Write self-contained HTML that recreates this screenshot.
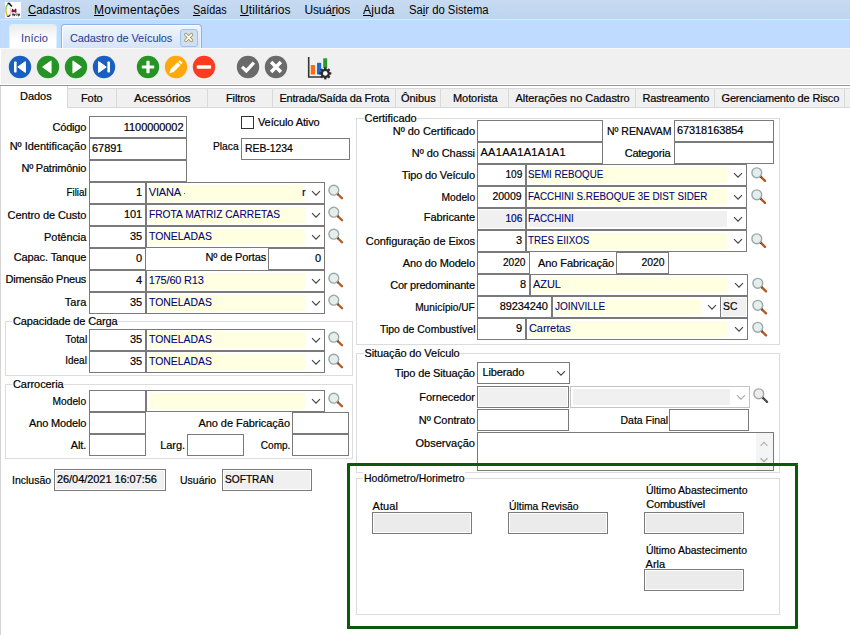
<!DOCTYPE html>
<html lang="pt-BR"><head><meta charset="utf-8"><title>Cadastro de Veículos</title>
<style>
html,body{margin:0;padding:0}
body{width:850px;height:635px;overflow:hidden;background:#fff;position:relative;font-family:"Liberation Sans",sans-serif;}
#r{position:absolute;left:0;top:0;width:850px;height:635px;overflow:hidden;background:#fff}
#r>*{position:absolute;box-sizing:content-box;margin:0;padding:0}
#r>span{white-space:nowrap;-webkit-text-stroke:0.2px;font-family:"Liberation Sans",sans-serif;}
#r>svg{overflow:visible;display:block}
u{text-decoration:underline;text-underline-offset:1px}
</style></head>
<body><div id="r">
<div style="left:0px;top:0px;width:850px;height:19px;background:linear-gradient(#c6daf1,#c3d8f0 50%,#bcd5ef);"></div>
<div style="left:0px;top:19px;width:850px;height:1px;background:#e6eaf0;"></div>
<div style="left:0px;top:20px;width:850px;height:28px;background:#bfdbff;"></div>
<div style="left:0px;top:48px;width:850px;height:1px;background:#fafafa;"></div>
<div style="left:1px;top:49px;width:849px;height:35px;background:#f0f0f0;"></div>
<div style="left:0px;top:85px;width:850px;height:1px;background:#969696;"></div>
<div style="left:0px;top:86px;width:1px;height:549px;background:#d4d4d4;"></div>
<svg style="left:5px;top:2px" width="16" height="16" viewBox="0 0 16 16"><rect width="16" height="16" fill="#fff"/><path d="M2.9 2 C1.4 3.4 0.9 5.6 0.9 7.6" fill="none" stroke="#8cc21f" stroke-width="1.5"/><path d="M0.9 7.6 C0.9 10 1.3 12.2 2.3 13.8" fill="none" stroke="#e2c21c" stroke-width="1.5"/><path d="M2.3 13.9 C3.3 14.8 4.6 14.2 5.3 12.6" fill="none" stroke="#7c1236" stroke-width="1.3"/><path d="M5.3 12.6 C5.9 10.5 5.9 8 5.4 6" fill="none" stroke="#e8b8c4" stroke-width="0.9"/><path d="M2.6 1.7 C3.8 0.9 4.8 1.6 5.3 2.9 L6.9 4.5" fill="none" stroke="#0e1626" stroke-width="1.6"/><path d="M7.2 10.4 L7.6 7.6 L9 9.6 L10.6 7.4 L10.8 10.6" fill="none" stroke="#7c1236" stroke-width="1.5" stroke-linejoin="round"/><path d="M7.2 11.6 L8 13.4 L8.8 12 L9.6 13.4 L10.4 11.8 M11.2 13.3 L12.4 13.3 M11.4 11.9 L12.3 11.9 M13 11.8 L13.6 13.4 L14.2 12.2 L14.8 13.4" fill="none" stroke="#3c3c40" stroke-width="1.1"/></svg>
<span style="top:3px;font-size:12px;line-height:14px;color:#000;transform:scaleX(0.9524);transform-origin:0 0;left:28px;-webkit-text-stroke:0;"><u>C</u>adastros</span>
<span style="top:3px;font-size:12px;line-height:14px;color:#000;letter-spacing:0.119px;left:94px;-webkit-text-stroke:0;"><u>M</u>ovimentações</span>
<span style="top:3px;font-size:12px;line-height:14px;color:#000;transform:scaleX(0.8990);transform-origin:0 0;left:193px;-webkit-text-stroke:0;"><u>S</u>aídas</span>
<span style="top:3px;font-size:12px;line-height:14px;color:#000;letter-spacing:0.113px;left:240px;-webkit-text-stroke:0;"><u>U</u>tilitários</span>
<span style="top:3px;font-size:12px;line-height:14px;color:#000;letter-spacing:-0.220px;left:304.5px;-webkit-text-stroke:0;">Usuá<u>r</u>ios</span>
<span style="top:3px;font-size:12px;line-height:14px;color:#000;letter-spacing:0.179px;left:363px;-webkit-text-stroke:0;"><u>A</u>juda</span>
<span style="top:3px;font-size:12px;line-height:14px;color:#000;transform:scaleX(0.9396);transform-origin:0 0;left:408.5px;-webkit-text-stroke:0;">Sa<u>i</u>r do Sistema</span>
<div style="left:9px;top:24px;width:46px;height:23px;border:1px solid #d4f2ff;border-bottom:none;border-radius:4px 4px 0 0;background:linear-gradient(#ececec,#fff 70%);"></div>
<span style="top:32px;font-size:11px;line-height:13px;color:#1e3a8c;letter-spacing:0.134px;left:21px;-webkit-text-stroke:0;">Início</span>
<div style="left:61px;top:24px;width:139px;height:23px;border:1px solid #8fb3e4;border-bottom:none;border-radius:4px 4px 0 0;background:linear-gradient(#eff5fd,#d7e4f8);box-shadow:inset 1px 1px 0 #fff,inset -1px 0 0 #e8f4ff;"></div>
<span style="top:32px;font-size:11px;line-height:13px;color:#1e3a8c;letter-spacing:-0.124px;left:70px;-webkit-text-stroke:0;">Cadastro de Veículos</span>
<div style="left:180px;top:29px;width:16px;height:16px;border:1px solid #a4c0e6;border-radius:3px;background:#cfdff5;"></div>
<svg style="left:183px;top:32px" width="12" height="12" viewBox="0 0 12 12"><path d="M2.9 2.6 L8.5 8.4 M8.5 2.6 L2.9 8.4" stroke="#94853c" stroke-width="3.3" stroke-linecap="round"/><path d="M2.9 2.6 L8.5 8.4 M8.5 2.6 L2.9 8.4" stroke="#fffdf4" stroke-width="1.9" stroke-linecap="round"/></svg>
<svg style="left:8px;top:55px" width="24" height="24" viewBox="0 0 24 24"><circle cx="12" cy="12" r="11.2" fill="#1a5fbf"/><rect x="6" y="6.4" width="2.6" height="11.2" rx="0.8" fill="#fff"/><path d="M9.8 12 L17.4 6.6 L17.4 17.4 Z" fill="#fff" stroke="#fff" stroke-width="1" stroke-linejoin="round"/></svg>
<svg style="left:36px;top:55px" width="24" height="24" viewBox="0 0 24 24"><circle cx="12" cy="12" r="11.2" fill="#259425"/><path d="M6.9 12 L15 6.2 L15 17.8 Z" fill="#fff" stroke="#fff" stroke-width="1.2" stroke-linejoin="round"/></svg>
<svg style="left:64px;top:55px" width="24" height="24" viewBox="0 0 24 24"><circle cx="12" cy="12" r="11.2" fill="#259425"/><path d="M17.1 12 L9 6.2 L9 17.8 Z" fill="#fff" stroke="#fff" stroke-width="1.2" stroke-linejoin="round"/></svg>
<svg style="left:92px;top:55px" width="24" height="24" viewBox="0 0 24 24"><circle cx="12" cy="12" r="11.2" fill="#1a5fbf"/><rect x="15.4" y="6.4" width="2.6" height="11.2" rx="0.8" fill="#fff"/><path d="M14.2 12 L6.6 6.6 L6.6 17.4 Z" fill="#fff" stroke="#fff" stroke-width="1" stroke-linejoin="round"/></svg>
<svg style="left:136px;top:55px" width="24" height="24" viewBox="0 0 24 24"><circle cx="12" cy="12" r="11.2" fill="#259425"/><rect x="5.8" y="10.4" width="12.4" height="3.2" rx="0.7" fill="#fff"/><rect x="10.4" y="5.8" width="3.2" height="12.4" rx="0.7" fill="#fff"/></svg>
<svg style="left:164px;top:55px" width="24" height="24" viewBox="0 0 24 24"><circle cx="12" cy="12" r="11.2" fill="#ffa80a"/><path d="M5.5 18.2 L6.9 14 L13.6 7.2 L16.4 10 L9.8 16.8 Z" fill="#fff" stroke="#fff" stroke-width="0.3" stroke-linejoin="round"/><path d="M14.3 6.5 L15.5 5.3 Q15.9 5 16.3 5.4 L18.3 7.4 Q18.6 7.8 18.3 8.2 L17.1 9.3 Z" fill="#fff"/></svg>
<svg style="left:192px;top:55px" width="24" height="24" viewBox="0 0 24 24"><circle cx="12" cy="12" r="11.2" fill="#ff3b1f"/><rect x="4.8" y="10.3" width="14.3" height="3.4" rx="0.6" fill="#fff"/></svg>
<svg style="left:236px;top:55px" width="24" height="24" viewBox="0 0 24 24"><circle cx="12" cy="12" r="11.2" fill="#6a6a6a"/><path d="M6.1 11.9 L10.3 15.9 L17.9 7.7" fill="none" stroke="#fff" stroke-width="3.3" stroke-linecap="butt" stroke-linejoin="miter"/></svg>
<svg style="left:264px;top:55px" width="24" height="24" viewBox="0 0 24 24"><circle cx="12" cy="12" r="11.2" fill="#6a6a6a"/><path d="M7.1 7.1 L16.9 16.9 M16.9 7.1 L7.1 16.9" stroke="#fff" stroke-width="3.5" stroke-linecap="butt"/></svg>
<svg style="left:306px;top:55px" width="28" height="26" viewBox="0 0 28 26"><path d="M2.7 2 V22 H15" fill="none" stroke="#333" stroke-width="1.6"/><rect x="4.8" y="10" width="4.2" height="9.6" rx="0.6" fill="#ff6a10"/><rect x="11" y="7.8" width="4.2" height="11.8" rx="0.6" fill="#1e6ad2"/><rect x="17.2" y="3.2" width="4" height="10" rx="0.6" fill="#2a9a2a"/><g transform="translate(19.3,18.4)"><circle r="3.4" fill="none" stroke="#2e2e2e" stroke-width="2.4"/><rect x="-1.2" y="-6" width="2.4" height="2.6" fill="#2e2e2e" transform="rotate(0)"/><rect x="-1.2" y="-6" width="2.4" height="2.6" fill="#2e2e2e" transform="rotate(45)"/><rect x="-1.2" y="-6" width="2.4" height="2.6" fill="#2e2e2e" transform="rotate(90)"/><rect x="-1.2" y="-6" width="2.4" height="2.6" fill="#2e2e2e" transform="rotate(135)"/><rect x="-1.2" y="-6" width="2.4" height="2.6" fill="#2e2e2e" transform="rotate(180)"/><rect x="-1.2" y="-6" width="2.4" height="2.6" fill="#2e2e2e" transform="rotate(225)"/><rect x="-1.2" y="-6" width="2.4" height="2.6" fill="#2e2e2e" transform="rotate(270)"/><rect x="-1.2" y="-6" width="2.4" height="2.6" fill="#2e2e2e" transform="rotate(315)"/><circle r="2.1" fill="#fff"/></g></svg>
<div style="left:68px;top:88px;width:782px;height:1px;background:#d9d9d9;"></div>
<div style="left:68px;top:89px;width:782px;height:18px;background:#f0f0f0;"></div>
<div style="left:68px;top:107px;width:782px;height:1px;background:#d9d9d9;"></div>
<div style="left:67px;top:86px;width:1px;height:22px;background:#d9d9d9;"></div>
<div style="left:116px;top:88px;width:1px;height:20px;background:#d9d9d9;"></div>
<div style="left:207px;top:88px;width:1px;height:20px;background:#d9d9d9;"></div>
<div style="left:272px;top:88px;width:1px;height:20px;background:#d9d9d9;"></div>
<div style="left:395px;top:88px;width:1px;height:20px;background:#d9d9d9;"></div>
<div style="left:440px;top:88px;width:1px;height:20px;background:#d9d9d9;"></div>
<div style="left:508px;top:88px;width:1px;height:20px;background:#d9d9d9;"></div>
<div style="left:635px;top:88px;width:1px;height:20px;background:#d9d9d9;"></div>
<div style="left:714px;top:88px;width:1px;height:20px;background:#d9d9d9;"></div>
<div style="left:844px;top:88px;width:1px;height:20px;background:#d9d9d9;"></div>
<span style="top:90px;font-size:11px;line-height:13px;color:#000;letter-spacing:-0.039px;left:20px;">Dados</span>
<span style="top:92px;font-size:11px;line-height:13px;color:#000;letter-spacing:-0.104px;left:81px;">Foto</span>
<span style="top:92px;font-size:11px;line-height:13px;color:#000;transform:scaleX(1.0521);transform-origin:0 0;left:134px;">Acessórios</span>
<span style="top:92px;font-size:11px;line-height:13px;color:#000;letter-spacing:-0.122px;left:226px;">Filtros</span>
<span style="top:92px;font-size:11px;line-height:13px;color:#000;letter-spacing:-0.216px;left:279.5px;">Entrada/Saída da Frota</span>
<span style="top:92px;font-size:11px;line-height:13px;color:#000;letter-spacing:-0.043px;left:401px;">Ônibus</span>
<span style="top:92px;font-size:11px;line-height:13px;color:#000;letter-spacing:-0.072px;left:453px;">Motorista</span>
<span style="top:92px;font-size:11px;line-height:13px;color:#000;letter-spacing:-0.039px;left:515.5px;">Alterações no Cadastro</span>
<span style="top:92px;font-size:11px;line-height:13px;color:#000;letter-spacing:-0.208px;left:642.5px;">Rastreamento</span>
<span style="top:92px;font-size:11px;line-height:13px;color:#000;letter-spacing:-0.157px;left:721.5px;">Gerenciamento de Risco</span>
<span style="top:121px;font-size:11px;line-height:13px;color:#000;letter-spacing:-0.210px;right:763.910px;">Código</span>
<span style="top:140px;font-size:11px;line-height:13px;color:#000;letter-spacing:-0.011px;right:763.711px;">Nº Identificação</span>
<span style="top:162px;font-size:11px;line-height:13px;color:#000;letter-spacing:-0.231px;right:763.931px;">Nº Patrimônio</span>
<span style="top:186px;font-size:11px;line-height:13px;color:#000;transform:scaleX(0.8884);transform-origin:100% 0;right:763.700px;">Filial</span>
<span style="top:209px;font-size:11px;line-height:13px;color:#000;letter-spacing:-0.101px;right:763.801px;">Centro de Custo</span>
<span style="top:231px;font-size:11px;line-height:13px;color:#000;letter-spacing:-0.089px;right:763.789px;">Potência</span>
<span style="top:251px;font-size:11px;line-height:13px;color:#000;letter-spacing:-0.093px;right:763.793px;">Capac. Tanque</span>
<span style="top:273px;font-size:11px;line-height:13px;color:#000;letter-spacing:-0.227px;right:763.927px;">Dimensão Pneus</span>
<span style="top:296px;font-size:11px;line-height:13px;color:#000;letter-spacing:0.048px;right:763.652px;">Tara</span>
<div style="left:89px;top:116px;width:96px;height:20px;background:#fff;border:1px solid #7a7a7a;"></div>
<span style="top:121px;font-size:11px;line-height:13px;color:#000;letter-spacing:-0.077px;right:666.577px;">1100000002</span>
<div style="left:89px;top:138px;width:96px;height:20px;background:#fff;border:1px solid #7a7a7a;"></div>
<span style="top:142px;font-size:11px;line-height:13px;color:#000;letter-spacing:-0.049px;left:92px;">67891</span>
<div style="left:89px;top:160px;width:96px;height:20px;background:#fff;border:1px solid #7a7a7a;"></div>
<div style="left:241px;top:116px;width:11px;height:11px;border:1px solid #333;background:#fff"></div>
<span style="top:116px;font-size:11px;line-height:13px;color:#000;letter-spacing:-0.108px;left:258px;">Veículo Ativo</span>
<span style="top:140px;font-size:11px;line-height:13px;color:#000;transform:scaleX(0.9299);transform-origin:0 0;left:213px;">Placa</span>
<div style="left:241px;top:138px;width:107px;height:20px;background:#fff;border:1px solid #7a7a7a;"></div>
<span style="top:142px;font-size:11px;line-height:13px;color:#000;transform:scaleX(0.9436);transform-origin:0 0;left:244.5px;">REB-1234</span>
<div style="left:89px;top:182px;width:55px;height:20px;background:#fff;border:1px solid #7a7a7a;"></div>
<span style="top:186px;font-size:11px;line-height:13px;color:#000;letter-spacing:-0.120px;right:708.120px;">1</span>
<div style="left:146px;top:182px;width:177px;height:20px;background:#fff;border:1px solid #7a7a7a;"></div>
<div style="left:149px;top:185px;width:156px;height:16px;background:#ffffe1;"></div>
<svg style="left:311px;top:190px" width="10" height="7" viewBox="0 0 10 7"><path d="M1 1.1 L5 5.1 L9 1.1" fill="none" stroke="#404040" stroke-width="1.1"/></svg>
<span style="top:186px;font-size:11px;line-height:13px;color:#00007f;letter-spacing:-0.183px;left:148.8px;-webkit-text-stroke:0.08px;">VIANA</span>
<svg style="left:328px;top:184px" width="17" height="17" viewBox="0 -0.4000000000000057 17 17"><line x1="9.6" y1="9.6" x2="14" y2="13.9" stroke="#b4561e" stroke-width="2.3" stroke-linecap="round"/><line x1="9.3" y1="9.4" x2="10.2" y2="10.2" stroke="#4a2a12" stroke-width="2.3"/><circle cx="5.8" cy="5.8" r="4.9" fill="#e7eded" stroke="#98a9a9" stroke-width="1.4"/></svg>
<span style="top:186px;font-size:11px;line-height:13px;color:#00007f;letter-spacing:-0.120px;left:302px;">r</span>
<div style="left:184px;top:193px;width:1px;height:1px;background:#6060b0;"></div>
<div style="left:89px;top:204px;width:55px;height:20px;background:#fff;border:1px solid #7a7a7a;"></div>
<span style="top:208px;font-size:11px;line-height:13px;color:#000;letter-spacing:-0.120px;right:708.120px;">101</span>
<div style="left:146px;top:204px;width:177px;height:20px;background:#fff;border:1px solid #7a7a7a;"></div>
<div style="left:149px;top:207px;width:156px;height:16px;background:#ffffe1;"></div>
<svg style="left:311px;top:212px" width="10" height="7" viewBox="0 0 10 7"><path d="M1 1.1 L5 5.1 L9 1.1" fill="none" stroke="#404040" stroke-width="1.1"/></svg>
<span style="top:208px;font-size:11px;line-height:13px;color:#00007f;transform:scaleX(0.9287);transform-origin:0 0;left:148.8px;-webkit-text-stroke:0.08px;">FROTA MATRIZ CARRETAS</span>
<svg style="left:328px;top:206px" width="17" height="17" viewBox="0 -0.4000000000000057 17 17"><line x1="9.6" y1="9.6" x2="14" y2="13.9" stroke="#b4561e" stroke-width="2.3" stroke-linecap="round"/><line x1="9.3" y1="9.4" x2="10.2" y2="10.2" stroke="#4a2a12" stroke-width="2.3"/><circle cx="5.8" cy="5.8" r="4.9" fill="#e7eded" stroke="#98a9a9" stroke-width="1.4"/></svg>
<div style="left:89px;top:226px;width:55px;height:20px;background:#fff;border:1px solid #7a7a7a;"></div>
<span style="top:230px;font-size:11px;line-height:13px;color:#000;letter-spacing:-0.120px;right:708.120px;">35</span>
<div style="left:146px;top:226px;width:177px;height:20px;background:#fff;border:1px solid #7a7a7a;"></div>
<div style="left:149px;top:229px;width:156px;height:16px;background:#ffffe1;"></div>
<svg style="left:311px;top:234px" width="10" height="7" viewBox="0 0 10 7"><path d="M1 1.1 L5 5.1 L9 1.1" fill="none" stroke="#404040" stroke-width="1.1"/></svg>
<span style="top:230px;font-size:11px;line-height:13px;color:#00007f;transform:scaleX(0.9460);transform-origin:0 0;left:148.8px;-webkit-text-stroke:0.08px;">TONELADAS</span>
<svg style="left:328px;top:228px" width="17" height="17" viewBox="0 -0.4000000000000057 17 17"><line x1="9.6" y1="9.6" x2="14" y2="13.9" stroke="#b4561e" stroke-width="2.3" stroke-linecap="round"/><line x1="9.3" y1="9.4" x2="10.2" y2="10.2" stroke="#4a2a12" stroke-width="2.3"/><circle cx="5.8" cy="5.8" r="4.9" fill="#e7eded" stroke="#98a9a9" stroke-width="1.4"/></svg>
<div style="left:89px;top:248px;width:55px;height:20px;background:#fff;border:1px solid #7a7a7a;"></div>
<span style="top:252px;font-size:11px;line-height:13px;color:#000;letter-spacing:-0.120px;right:708.120px;">0</span>
<span style="top:251px;font-size:11px;line-height:13px;color:#000;letter-spacing:-0.126px;left:205.5px;">Nº de Portas</span>
<div style="left:268px;top:248px;width:55px;height:20px;background:#fff;border:1px solid #7a7a7a;"></div>
<span style="top:252px;font-size:11px;line-height:13px;color:#000;letter-spacing:-0.120px;right:529.120px;">0</span>
<div style="left:89px;top:270px;width:55px;height:20px;background:#fff;border:1px solid #7a7a7a;"></div>
<span style="top:274px;font-size:11px;line-height:13px;color:#000;letter-spacing:-0.120px;right:708.120px;">4</span>
<div style="left:146px;top:270px;width:177px;height:20px;background:#fff;border:1px solid #7a7a7a;"></div>
<div style="left:149px;top:273px;width:156px;height:16px;background:#ffffe1;"></div>
<svg style="left:311px;top:278px" width="10" height="7" viewBox="0 0 10 7"><path d="M1 1.1 L5 5.1 L9 1.1" fill="none" stroke="#404040" stroke-width="1.1"/></svg>
<span style="top:274px;font-size:11px;line-height:13px;color:#00007f;letter-spacing:-0.204px;left:148.8px;-webkit-text-stroke:0.08px;">175/60 R13</span>
<svg style="left:328px;top:272px" width="17" height="17" viewBox="0 -0.39999999999997726 17 17"><line x1="9.6" y1="9.6" x2="14" y2="13.9" stroke="#b4561e" stroke-width="2.3" stroke-linecap="round"/><line x1="9.3" y1="9.4" x2="10.2" y2="10.2" stroke="#4a2a12" stroke-width="2.3"/><circle cx="5.8" cy="5.8" r="4.9" fill="#e7eded" stroke="#98a9a9" stroke-width="1.4"/></svg>
<div style="left:89px;top:292px;width:55px;height:20px;background:#fff;border:1px solid #7a7a7a;"></div>
<span style="top:296px;font-size:11px;line-height:13px;color:#000;letter-spacing:-0.120px;right:708.120px;">35</span>
<div style="left:146px;top:292px;width:177px;height:20px;background:#fff;border:1px solid #7a7a7a;"></div>
<div style="left:149px;top:295px;width:156px;height:16px;background:#ffffe1;"></div>
<svg style="left:311px;top:300px" width="10" height="7" viewBox="0 0 10 7"><path d="M1 1.1 L5 5.1 L9 1.1" fill="none" stroke="#404040" stroke-width="1.1"/></svg>
<span style="top:296px;font-size:11px;line-height:13px;color:#00007f;transform:scaleX(0.9460);transform-origin:0 0;left:148.8px;-webkit-text-stroke:0.08px;">TONELADAS</span>
<svg style="left:328px;top:294px" width="17" height="17" viewBox="0 -0.39999999999997726 17 17"><line x1="9.6" y1="9.6" x2="14" y2="13.9" stroke="#b4561e" stroke-width="2.3" stroke-linecap="round"/><line x1="9.3" y1="9.4" x2="10.2" y2="10.2" stroke="#4a2a12" stroke-width="2.3"/><circle cx="5.8" cy="5.8" r="4.9" fill="#e7eded" stroke="#98a9a9" stroke-width="1.4"/></svg>
<div style="left:5px;top:321px;width:346px;height:53px;border:1px solid #dcdcdc;"></div>
<div style="left:12px;top:315px;width:106px;height:12px;background:#fff;"></div>
<span style="top:315px;font-size:11px;line-height:13px;color:#000;letter-spacing:-0.128px;left:13px;">Capacidade de Carga</span>
<span style="top:333px;font-size:11px;line-height:13px;color:#000;transform:scaleX(0.9505);transform-origin:100% 0;right:762.700px;">Total</span>
<div style="left:89px;top:329px;width:55px;height:20px;background:#fff;border:1px solid #7a7a7a;"></div>
<span style="top:333px;font-size:11px;line-height:13px;color:#000;letter-spacing:-0.120px;right:708.120px;">35</span>
<div style="left:146px;top:329px;width:177px;height:20px;background:#fff;border:1px solid #7a7a7a;"></div>
<div style="left:149px;top:332px;width:156px;height:16px;background:#ffffe1;"></div>
<svg style="left:311px;top:337px" width="10" height="7" viewBox="0 0 10 7"><path d="M1 1.1 L5 5.1 L9 1.1" fill="none" stroke="#404040" stroke-width="1.1"/></svg>
<span style="top:333px;font-size:11px;line-height:13px;color:#00007f;transform:scaleX(0.9460);transform-origin:0 0;left:148.8px;-webkit-text-stroke:0.08px;">TONELADAS</span>
<svg style="left:328px;top:331px" width="17" height="17" viewBox="0 -0.39999999999997726 17 17"><line x1="9.6" y1="9.6" x2="14" y2="13.9" stroke="#b4561e" stroke-width="2.3" stroke-linecap="round"/><line x1="9.3" y1="9.4" x2="10.2" y2="10.2" stroke="#4a2a12" stroke-width="2.3"/><circle cx="5.8" cy="5.8" r="4.9" fill="#e7eded" stroke="#98a9a9" stroke-width="1.4"/></svg>
<span style="top:354px;font-size:11px;line-height:13px;color:#000;transform:scaleX(0.9053);transform-origin:100% 0;right:762.700px;">Ideal</span>
<div style="left:89px;top:351px;width:55px;height:20px;background:#fff;border:1px solid #7a7a7a;"></div>
<span style="top:355px;font-size:11px;line-height:13px;color:#000;letter-spacing:-0.120px;right:708.120px;">35</span>
<div style="left:146px;top:351px;width:177px;height:20px;background:#fff;border:1px solid #7a7a7a;"></div>
<div style="left:149px;top:354px;width:156px;height:16px;background:#ffffe1;"></div>
<svg style="left:311px;top:359px" width="10" height="7" viewBox="0 0 10 7"><path d="M1 1.1 L5 5.1 L9 1.1" fill="none" stroke="#404040" stroke-width="1.1"/></svg>
<span style="top:355px;font-size:11px;line-height:13px;color:#00007f;transform:scaleX(0.9460);transform-origin:0 0;left:148.8px;-webkit-text-stroke:0.08px;">TONELADAS</span>
<svg style="left:328px;top:353px" width="17" height="17" viewBox="0 -0.39999999999997726 17 17"><line x1="9.6" y1="9.6" x2="14" y2="13.9" stroke="#b4561e" stroke-width="2.3" stroke-linecap="round"/><line x1="9.3" y1="9.4" x2="10.2" y2="10.2" stroke="#4a2a12" stroke-width="2.3"/><circle cx="5.8" cy="5.8" r="4.9" fill="#e7eded" stroke="#98a9a9" stroke-width="1.4"/></svg>
<div style="left:5px;top:384px;width:346px;height:73px;border:1px solid #dcdcdc;"></div>
<div style="left:12px;top:378px;width:52px;height:12px;background:#fff;"></div>
<span style="top:378px;font-size:11px;line-height:13px;color:#000;letter-spacing:-0.076px;left:13px;">Carroceria</span>
<span style="top:395px;font-size:11px;line-height:13px;color:#000;transform:scaleX(0.9313);transform-origin:100% 0;right:763.700px;">Modelo</span>
<div style="left:89px;top:390px;width:55px;height:20px;background:#fff;border:1px solid #7a7a7a;"></div>
<div style="left:146px;top:390px;width:177px;height:20px;background:#fff;border:1px solid #7a7a7a;"></div>
<div style="left:149px;top:393px;width:156px;height:16px;background:#ffffe1;"></div>
<svg style="left:311px;top:398px" width="10" height="7" viewBox="0 0 10 7"><path d="M1 1.1 L5 5.1 L9 1.1" fill="none" stroke="#404040" stroke-width="1.1"/></svg>
<svg style="left:328px;top:392px" width="17" height="17" viewBox="0 -0.39999999999997726 17 17"><line x1="9.6" y1="9.6" x2="14" y2="13.9" stroke="#b4561e" stroke-width="2.3" stroke-linecap="round"/><line x1="9.3" y1="9.4" x2="10.2" y2="10.2" stroke="#4a2a12" stroke-width="2.3"/><circle cx="5.8" cy="5.8" r="4.9" fill="#e7eded" stroke="#98a9a9" stroke-width="1.4"/></svg>
<span style="top:417px;font-size:11px;line-height:13px;color:#000;letter-spacing:-0.162px;right:763.862px;">Ano Modelo</span>
<div style="left:89px;top:412px;width:55px;height:20px;background:#fff;border:1px solid #7a7a7a;"></div>
<span style="top:439px;font-size:11px;line-height:13px;color:#000;letter-spacing:-0.077px;right:763.777px;">Alt.</span>
<div style="left:89px;top:434px;width:55px;height:20px;background:#fff;border:1px solid #7a7a7a;"></div>
<span style="top:417px;font-size:11px;line-height:13px;color:#000;letter-spacing:-0.044px;right:560.044px;">Ano de Fabricação</span>
<div style="left:292px;top:412px;width:55px;height:20px;background:#fff;border:1px solid #7a7a7a;"></div>
<span style="top:439px;font-size:11px;line-height:13px;color:#000;letter-spacing:-0.096px;right:665.096px;">Larg.</span>
<div style="left:187px;top:434px;width:55px;height:20px;background:#fff;border:1px solid #7a7a7a;"></div>
<span style="top:439px;font-size:11px;line-height:13px;color:#000;transform:scaleX(0.9134);transform-origin:100% 0;right:560.000px;">Comp.</span>
<div style="left:292px;top:434px;width:55px;height:20px;background:#fff;border:1px solid #7a7a7a;"></div>
<span style="top:474px;font-size:11px;line-height:13px;color:#000;transform:scaleX(0.9540);transform-origin:0 0;left:11.5px;">Inclusão</span>
<div style="left:54px;top:469px;width:110px;height:20px;background:#f0f0f0;border:1px solid #7a7a7a;box-shadow:inset 0 0 0 1px #fff;"></div>
<span style="top:473px;font-size:11px;line-height:13px;color:#000;letter-spacing:-0.057px;left:57px;">26/04/2021 16:07:56</span>
<span style="top:474px;font-size:11px;line-height:13px;color:#000;transform:scaleX(0.9523);transform-origin:0 0;left:179.5px;">Usuário</span>
<div style="left:222px;top:469px;width:88px;height:20px;background:#f0f0f0;border:1px solid #7a7a7a;box-shadow:inset 0 0 0 1px #fff;"></div>
<span style="top:473px;font-size:11px;line-height:13px;color:#000;transform:scaleX(0.9246);transform-origin:0 0;left:224.5px;">SOFTRAN</span>
<div style="left:356px;top:118px;width:422px;height:225px;border:1px solid #dcdcdc;"></div>
<div style="left:363.5px;top:112px;width:53.5px;height:12px;background:#fff;"></div>
<span style="top:112px;font-size:11px;line-height:13px;color:#000;letter-spacing:-0.043px;left:364.5px;">Certificado</span>
<span style="top:125px;font-size:11px;line-height:13px;color:#000;letter-spacing:-0.047px;right:375.047px;">Nº do Certificado</span>
<div style="left:477px;top:120px;width:124px;height:20px;background:#fff;border:1px solid #7a7a7a;"></div>
<span style="top:125px;font-size:11px;line-height:13px;color:#000;transform:scaleX(0.9528);transform-origin:0 0;left:606.5px;">Nº RENAVAM</span>
<div style="left:674px;top:120px;width:98px;height:20px;background:#fff;border:1px solid #7a7a7a;"></div>
<span style="top:124px;font-size:11px;line-height:13px;color:#000;letter-spacing:-0.091px;left:677px;">67318163854</span>
<span style="top:147px;font-size:11px;line-height:13px;color:#000;letter-spacing:-0.070px;right:375.070px;">Nº do Chassi</span>
<div style="left:477px;top:142px;width:124px;height:20px;background:#fff;border:1px solid #7a7a7a;"></div>
<span style="top:146px;font-size:11px;line-height:13px;color:#000;letter-spacing:0.279px;left:480.5px;">AA1AA1A1A1A1</span>
<span style="top:147px;font-size:11px;line-height:13px;color:#000;letter-spacing:-0.234px;right:179.734px;">Categoria</span>
<div style="left:674px;top:142px;width:98px;height:20px;background:#fff;border:1px solid #7a7a7a;"></div>
<span style="top:169px;font-size:11px;line-height:13px;color:#000;letter-spacing:-0.155px;right:375.155px;">Tipo do Veículo</span>
<div style="left:477px;top:164px;width:47px;height:20px;background:#fff;border:1px solid #7a7a7a;"></div>
<span style="top:168px;font-size:11px;line-height:13px;color:#000;transform:scaleX(0.9205);transform-origin:100% 0;right:328.000px;">109</span>
<div style="left:526px;top:164px;width:219px;height:20px;background:#fff;border:1px solid #7a7a7a;"></div>
<div style="left:529px;top:167px;width:198px;height:16px;background:#ffffe1;"></div>
<svg style="left:733px;top:172px" width="10" height="7" viewBox="0 0 10 7"><path d="M1 1.1 L5 5.1 L9 1.1" fill="none" stroke="#404040" stroke-width="1.1"/></svg>
<span style="top:168px;font-size:11px;line-height:13px;color:#00007f;transform:scaleX(0.8850);transform-origin:0 0;left:528.4px;-webkit-text-stroke:0.08px;">SEMI REBOQUE</span>
<svg style="left:751px;top:167px" width="17" height="17" viewBox="0 0 17 17"><line x1="9.6" y1="9.6" x2="14" y2="13.9" stroke="#b4561e" stroke-width="2.3" stroke-linecap="round"/><line x1="9.3" y1="9.4" x2="10.2" y2="10.2" stroke="#4a2a12" stroke-width="2.3"/><circle cx="5.8" cy="5.8" r="4.9" fill="#e7eded" stroke="#98a9a9" stroke-width="1.4"/></svg>
<span style="top:191px;font-size:11px;line-height:13px;color:#000;transform:scaleX(0.9313);transform-origin:100% 0;right:375.000px;">Modelo</span>
<div style="left:477px;top:186px;width:47px;height:20px;background:#fff;border:1px solid #7a7a7a;"></div>
<span style="top:190px;font-size:11px;line-height:13px;color:#000;transform:scaleX(0.9544);transform-origin:100% 0;right:328.000px;">20009</span>
<div style="left:526px;top:186px;width:219px;height:20px;background:#fff;border:1px solid #7a7a7a;"></div>
<div style="left:529px;top:189px;width:198px;height:16px;background:#ffffe1;"></div>
<svg style="left:733px;top:194px" width="10" height="7" viewBox="0 0 10 7"><path d="M1 1.1 L5 5.1 L9 1.1" fill="none" stroke="#404040" stroke-width="1.1"/></svg>
<span style="top:190px;font-size:11px;line-height:13px;color:#00007f;transform:scaleX(0.8930);transform-origin:0 0;left:528.4px;-webkit-text-stroke:0.08px;">FACCHINI S.REBOQUE 3E DIST SIDER</span>
<svg style="left:751px;top:189px" width="17" height="17" viewBox="0 0 17 17"><line x1="9.6" y1="9.6" x2="14" y2="13.9" stroke="#b4561e" stroke-width="2.3" stroke-linecap="round"/><line x1="9.3" y1="9.4" x2="10.2" y2="10.2" stroke="#4a2a12" stroke-width="2.3"/><circle cx="5.8" cy="5.8" r="4.9" fill="#e7eded" stroke="#98a9a9" stroke-width="1.4"/></svg>
<span style="top:211px;font-size:11px;line-height:13px;color:#000;letter-spacing:-0.088px;right:375.088px;">Fabricante</span>
<div style="left:477px;top:208px;width:47px;height:20px;background:#f0f0f0;border:1px solid #7a7a7a;box-shadow:inset 0 0 0 1px #fff;"></div>
<span style="top:212px;font-size:11px;line-height:13px;color:#00007f;transform:scaleX(0.9205);transform-origin:100% 0;right:328.000px;">106</span>
<div style="left:526px;top:208px;width:219px;height:20px;background:#fff;border:1px solid #7a7a7a;"></div>
<div style="left:529px;top:211px;width:198px;height:16px;background:#f0f0f0;"></div>
<svg style="left:733px;top:216px" width="10" height="7" viewBox="0 0 10 7"><path d="M1 1.1 L5 5.1 L9 1.1" fill="none" stroke="#404040" stroke-width="1.1"/></svg>
<span style="top:212px;font-size:11px;line-height:13px;color:#00007f;transform:scaleX(0.8920);transform-origin:0 0;left:528.4px;-webkit-text-stroke:0.08px;">FACCHINI</span>
<span style="top:235px;font-size:11px;line-height:13px;color:#000;letter-spacing:-0.076px;right:375.076px;">Configuração de Eixos</span>
<div style="left:477px;top:230px;width:47px;height:20px;background:#fff;border:1px solid #7a7a7a;"></div>
<span style="top:234px;font-size:11px;line-height:13px;color:#000;letter-spacing:-0.120px;right:328.120px;">3</span>
<div style="left:526px;top:230px;width:219px;height:20px;background:#fff;border:1px solid #7a7a7a;"></div>
<div style="left:529px;top:233px;width:198px;height:16px;background:#ffffe1;"></div>
<svg style="left:733px;top:238px" width="10" height="7" viewBox="0 0 10 7"><path d="M1 1.1 L5 5.1 L9 1.1" fill="none" stroke="#404040" stroke-width="1.1"/></svg>
<span style="top:234px;font-size:11px;line-height:13px;color:#00007f;transform:scaleX(0.8874);transform-origin:0 0;left:528.4px;-webkit-text-stroke:0.08px;">TRES EIIXOS</span>
<svg style="left:751px;top:233px" width="17" height="17" viewBox="0 0 17 17"><line x1="9.6" y1="9.6" x2="14" y2="13.9" stroke="#b4561e" stroke-width="2.3" stroke-linecap="round"/><line x1="9.3" y1="9.4" x2="10.2" y2="10.2" stroke="#4a2a12" stroke-width="2.3"/><circle cx="5.8" cy="5.8" r="4.9" fill="#e7eded" stroke="#98a9a9" stroke-width="1.4"/></svg>
<span style="top:257px;font-size:11px;line-height:13px;color:#000;letter-spacing:-0.146px;right:375.146px;">Ano do Modelo</span>
<div style="left:477px;top:252px;width:51px;height:20px;background:#fff;border:1px solid #7a7a7a;"></div>
<span style="top:256px;font-size:11px;line-height:13px;color:#000;transform:scaleX(0.9230);transform-origin:100% 0;right:324.700px;">2020</span>
<span style="top:257px;font-size:11px;line-height:13px;color:#000;letter-spacing:-0.068px;left:538px;">Ano Fabricação</span>
<div style="left:616px;top:252px;width:51px;height:20px;background:#fff;border:1px solid #7a7a7a;"></div>
<span style="top:256px;font-size:11px;line-height:13px;color:#000;transform:scaleX(0.9435);transform-origin:100% 0;right:185.300px;">2020</span>
<span style="top:279px;font-size:11px;line-height:13px;color:#000;letter-spacing:-0.216px;right:375.216px;">Cor predominante</span>
<div style="left:477px;top:274px;width:51px;height:20px;background:#fff;border:1px solid #7a7a7a;"></div>
<span style="top:278px;font-size:11px;line-height:13px;color:#000;letter-spacing:-0.120px;right:324.120px;">8</span>
<div style="left:530px;top:274px;width:216px;height:20px;background:#fff;border:1px solid #7a7a7a;"></div>
<div style="left:533px;top:277px;width:195px;height:16px;background:#ffffe1;"></div>
<svg style="left:734px;top:282px" width="10" height="7" viewBox="0 0 10 7"><path d="M1 1.1 L5 5.1 L9 1.1" fill="none" stroke="#404040" stroke-width="1.1"/></svg>
<span style="top:278px;font-size:11px;line-height:13px;color:#00007f;letter-spacing:-0.056px;left:533.0px;-webkit-text-stroke:0.08px;">AZUL</span>
<svg style="left:752px;top:277px" width="17" height="17" viewBox="0 -0.5 17 17"><line x1="9.6" y1="9.6" x2="14" y2="13.9" stroke="#b4561e" stroke-width="2.3" stroke-linecap="round"/><line x1="9.3" y1="9.4" x2="10.2" y2="10.2" stroke="#4a2a12" stroke-width="2.3"/><circle cx="5.8" cy="5.8" r="4.9" fill="#e7eded" stroke="#98a9a9" stroke-width="1.4"/></svg>
<span style="top:301px;font-size:11px;line-height:13px;color:#000;transform:scaleX(0.9198);transform-origin:100% 0;right:375.000px;">Município/UF</span>
<div style="left:477px;top:296px;width:73px;height:20px;background:#fff;border:1px solid #7a7a7a;"></div>
<span style="top:300px;font-size:11px;line-height:13px;color:#000;letter-spacing:-0.094px;right:302.094px;">89234240</span>
<div style="left:552px;top:296px;width:167px;height:20px;background:#fff;border:1px solid #7a7a7a;"></div>
<div style="left:555px;top:299px;width:146px;height:16px;background:#ffffe1;"></div>
<svg style="left:707px;top:304px" width="10" height="7" viewBox="0 0 10 7"><path d="M1 1.1 L5 5.1 L9 1.1" fill="none" stroke="#404040" stroke-width="1.1"/></svg>
<span style="top:300px;font-size:11px;line-height:13px;color:#00007f;transform:scaleX(0.9122);transform-origin:0 0;left:554.7px;-webkit-text-stroke:0.08px;">JOINVILLE</span>
<svg style="left:752px;top:299px" width="17" height="17" viewBox="0 -0.5 17 17"><line x1="9.6" y1="9.6" x2="14" y2="13.9" stroke="#b4561e" stroke-width="2.3" stroke-linecap="round"/><line x1="9.3" y1="9.4" x2="10.2" y2="10.2" stroke="#4a2a12" stroke-width="2.3"/><circle cx="5.8" cy="5.8" r="4.9" fill="#e7eded" stroke="#98a9a9" stroke-width="1.4"/></svg>
<div style="left:720px;top:296px;width:26px;height:20px;background:#f0f0f0;border:1px solid #7a7a7a;box-shadow:inset 0 0 0 1px #fff;"></div>
<span style="top:300px;font-size:11px;line-height:13px;color:#000;transform:scaleX(0.9423);transform-origin:0 0;left:723px;">SC</span>
<span style="top:323px;font-size:11px;line-height:13px;color:#000;transform:scaleX(0.9514);transform-origin:100% 0;right:375.000px;">Tipo de Combustível</span>
<div style="left:477px;top:318px;width:47px;height:20px;background:#fff;border:1px solid #7a7a7a;"></div>
<span style="top:322px;font-size:11px;line-height:13px;color:#000;letter-spacing:-0.120px;right:328.120px;">9</span>
<div style="left:526px;top:318px;width:220px;height:20px;background:#fff;border:1px solid #7a7a7a;"></div>
<div style="left:529px;top:321px;width:199px;height:16px;background:#ffffe1;"></div>
<svg style="left:734px;top:326px" width="10" height="7" viewBox="0 0 10 7"><path d="M1 1.1 L5 5.1 L9 1.1" fill="none" stroke="#404040" stroke-width="1.1"/></svg>
<span style="top:322px;font-size:11px;line-height:13px;color:#00007f;letter-spacing:-0.073px;left:529.0px;-webkit-text-stroke:0.08px;">Carretas</span>
<svg style="left:752px;top:321px" width="17" height="17" viewBox="0 -0.5 17 17"><line x1="9.6" y1="9.6" x2="14" y2="13.9" stroke="#b4561e" stroke-width="2.3" stroke-linecap="round"/><line x1="9.3" y1="9.4" x2="10.2" y2="10.2" stroke="#4a2a12" stroke-width="2.3"/><circle cx="5.8" cy="5.8" r="4.9" fill="#e7eded" stroke="#98a9a9" stroke-width="1.4"/></svg>
<div style="left:356px;top:353px;width:422px;height:118px;border:1px solid #dcdcdc;"></div>
<div style="left:363.5px;top:347px;width:96.5px;height:12px;background:#fff;"></div>
<span style="top:347px;font-size:11px;line-height:13px;color:#000;letter-spacing:-0.113px;left:364.5px;">Situação do Veículo</span>
<span style="top:367px;font-size:11px;line-height:13px;color:#000;letter-spacing:-0.129px;right:375.129px;">Tipo de Situação</span>
<div style="left:477px;top:362px;width:91px;height:20px;background:#fff;border:1px solid #7a7a7a;"></div>
<svg style="left:556px;top:370px" width="10" height="7" viewBox="0 0 10 7"><path d="M1 1.1 L5 5.1 L9 1.1" fill="none" stroke="#404040" stroke-width="1.1"/></svg>
<span style="top:366px;font-size:11px;line-height:13px;color:#000;letter-spacing:-0.122px;left:482.5px;">Liberado</span>
<span style="top:391px;font-size:11px;line-height:13px;color:#000;letter-spacing:-0.067px;right:375.067px;">Fornecedor</span>
<div style="left:477px;top:386px;width:90px;height:20px;background:#f0f0f0;border:1px solid #7a7a7a;box-shadow:inset 0 0 0 1px #fff;"></div>
<div style="left:570px;top:386px;width:178px;height:20px;background:#fff;border:1px solid #c4c4c4;"></div>
<div style="left:573px;top:389px;width:157px;height:16px;background:#f0f0f0;"></div>
<svg style="left:736px;top:394px" width="10" height="7" viewBox="0 0 10 7"><path d="M1 1.1 L5 5.1 L9 1.1" fill="none" stroke="#a8a8a8" stroke-width="1.1"/></svg>
<svg style="left:753px;top:388px" width="17" height="17" viewBox="0 0 17 17"><line x1="9.6" y1="9.6" x2="14" y2="13.9" stroke="#4c4c4c" stroke-width="2.3" stroke-linecap="round"/><line x1="9.3" y1="9.4" x2="10.2" y2="10.2" stroke="#303030" stroke-width="2.3"/><circle cx="5.8" cy="5.8" r="4.9" fill="#ececec" stroke="#a6a6a6" stroke-width="1.4"/></svg>
<span style="top:414px;font-size:11px;line-height:13px;color:#000;letter-spacing:-0.102px;right:375.102px;">Nº Contrato</span>
<div style="left:477px;top:409px;width:90px;height:20px;background:#fff;border:1px solid #7a7a7a;"></div>
<span style="top:414px;font-size:11px;line-height:13px;color:#000;transform:scaleX(0.9493);transform-origin:100% 0;right:182.000px;">Data Final</span>
<div style="left:669px;top:409px;width:78px;height:20px;background:#fff;border:1px solid #7a7a7a;"></div>
<span style="top:437px;font-size:11px;line-height:13px;color:#000;letter-spacing:0.029px;right:374.971px;">Observação</span>
<div style="left:477px;top:432px;width:295px;height:37px;background:#fff;border:1px solid #7a7a7a;"></div>
<div style="left:756px;top:433px;width:17px;height:37px;background:#f4f4f4;"></div>
<svg style="left:760px;top:440.5px" width="8" height="6" viewBox="0 0 8 6"><path d="M0.6 4.8 L4 1.4 L7.4 4.8" fill="none" stroke="#b0b0b0" stroke-width="1.1"/></svg>
<svg style="left:760px;top:456.5px" width="8" height="6" viewBox="0 0 8 6"><path d="M0.6 1.2 L4 4.6 L7.4 1.2" fill="none" stroke="#a8a8a8" stroke-width="1.3"/></svg>
<div style="left:356px;top:478px;width:422px;height:135px;border:1px solid #dcdcdc;"></div>
<div style="left:363.2px;top:472px;width:102.0px;height:12px;background:#fff;"></div>
<span style="top:472px;font-size:11px;line-height:13px;color:#000;transform:scaleX(0.9512);transform-origin:0 0;left:364.2px;">Hodômetro/Horimetro</span>
<span style="top:500px;font-size:11px;line-height:13px;color:#000;letter-spacing:0.104px;left:372.5px;">Atual</span>
<div style="left:372px;top:512px;width:98px;height:20px;background:#ebebeb;border:1px solid #7a7a7a;box-shadow:inset 0 0 0 1px #fff;"></div>
<span style="top:500px;font-size:11px;line-height:13px;color:#000;transform:scaleX(0.9409);transform-origin:0 0;left:509px;">Última Revisão</span>
<div style="left:508px;top:512px;width:98px;height:20px;background:#ebebeb;border:1px solid #7a7a7a;box-shadow:inset 0 0 0 1px #fff;"></div>
<span style="top:484px;font-size:11px;line-height:13px;color:#000;transform:scaleX(0.9550);transform-origin:0 0;left:646.3px;">Último Abastecimento</span>
<span style="top:498px;font-size:11px;line-height:13px;color:#000;letter-spacing:-0.231px;left:646.3px;">Combustível</span>
<div style="left:644px;top:512px;width:98px;height:20px;background:#ebebeb;border:1px solid #7a7a7a;box-shadow:inset 0 0 0 1px #fff;"></div>
<span style="top:544px;font-size:11px;line-height:13px;color:#000;transform:scaleX(0.9503);transform-origin:0 0;left:645.6px;">Último Abastecimento</span>
<span style="top:558px;font-size:11px;line-height:13px;color:#000;letter-spacing:0.009px;left:645.6px;">Arla</span>
<div style="left:644px;top:569px;width:98px;height:20px;background:#ebebeb;border:1px solid #7a7a7a;box-shadow:inset 0 0 0 1px #fff;"></div>
<div style="left:347px;top:463px;width:445px;height:160px;border:3px solid #0b5a0b;"></div>
<div style="left:347px;top:463px;width:1px;height:1px;background:#e04040;"></div>
<div style="left:797px;top:464px;width:1px;height:1px;background:#e04040;"></div>
<div style="left:797px;top:628px;width:1px;height:1px;background:#e04040;"></div>
</div></body></html>
